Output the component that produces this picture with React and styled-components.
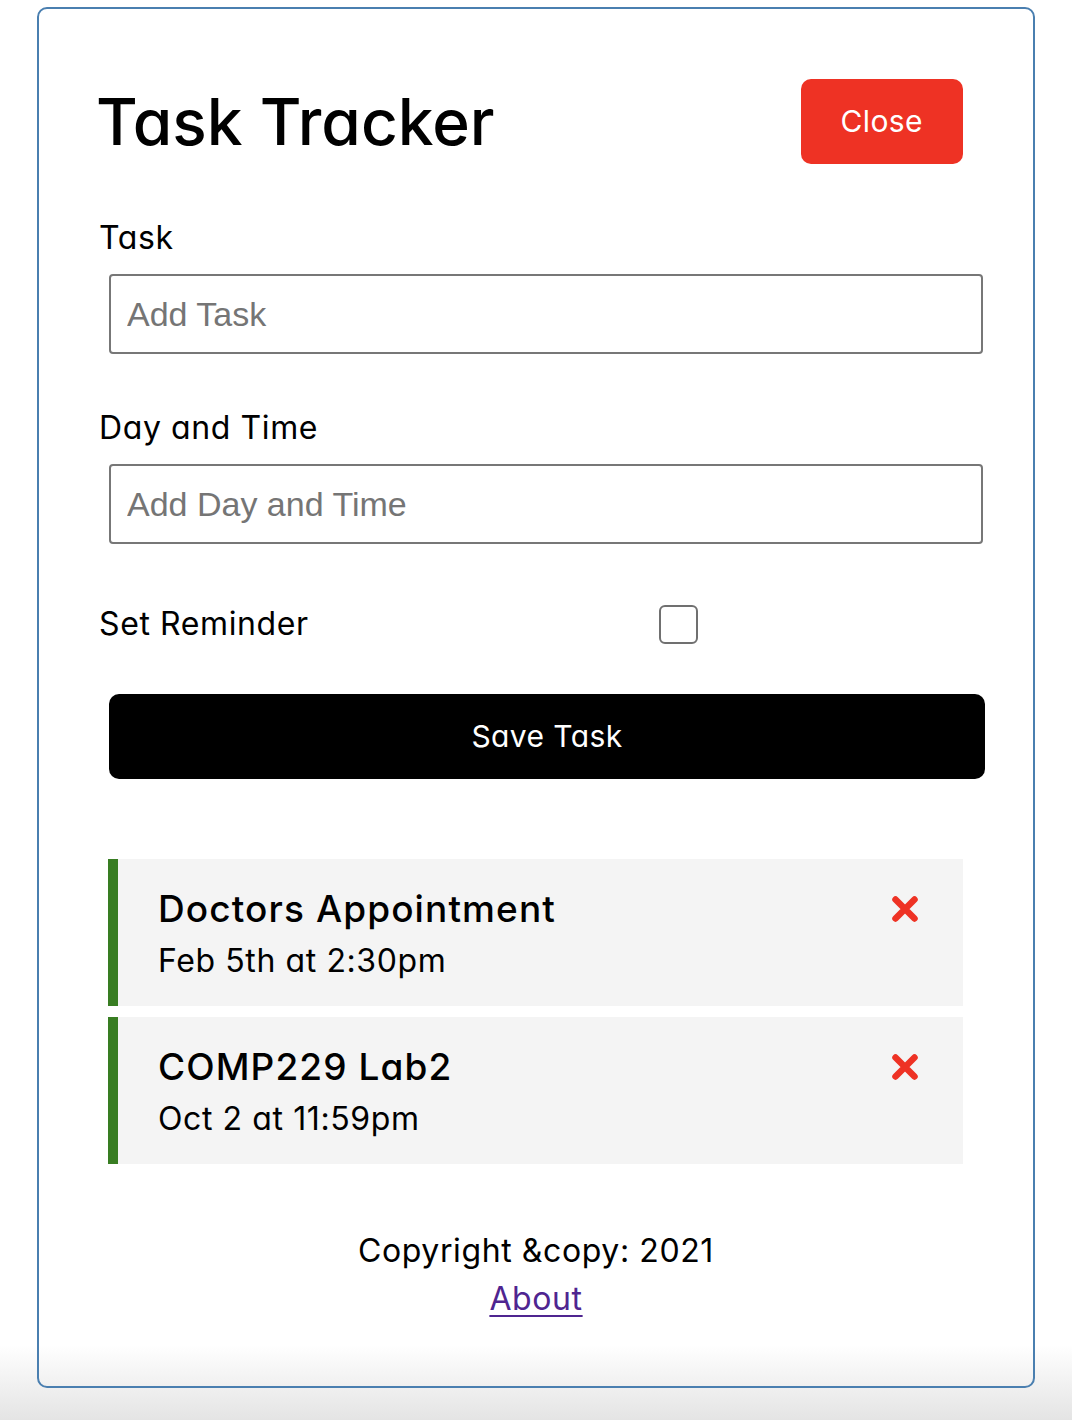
import React, { useState } from 'react';
import styled, { createGlobalStyle } from 'styled-components';

const GlobalStyle = createGlobalStyle`
  * {
    box-sizing: border-box;
    margin: 0;
    padding: 0;
  }
  html {
    min-height: 1420px;
    background: linear-gradient(to bottom, #ffffff 0, #ffffff 1345px, #e4e4e4 1420px);
  }
  body {
    font-family: Inter, 'Noto Sans', sans-serif;
    font-feature-settings: 'cv11' 1;
    font-size: 32px;
    line-height: 48px;
    letter-spacing: 0.6px;
    color: #000;
  }
`;

const Container = styled.div`
  width: 998px;
  margin: 7px 0 0 37px;
  border: 2px solid #4a7fb0;
  border-radius: 10px;
  padding: 60px;
`;

const Header = styled.header`
  display: flex;
  justify-content: space-between;
  align-items: center;
  margin-bottom: 40px;
`;

const Title = styled.h1`
  font-size: 64px;
  font-weight: 500;
  line-height: 96px;
  letter-spacing: 0;
  margin-left: -3px;
`;

const Button = styled.button`
  display: ${(p) => (p.block ? 'block' : 'inline-block')};
  width: ${(p) => (p.block ? 'calc(100% + 2px)' : 'auto')};
  background: ${(p) => p.color || '#000'};
  color: #fff;
  border: none;
  border-radius: 10px;
  margin: 10px;
  padding: 20px 40px;
  font-family: inherit;
  font-feature-settings: 'cv11' 1;
  font-size: 30px;
  line-height: 45px;
  letter-spacing: 0.4px;
  cursor: pointer;
`;

const Form = styled.form`
  margin-bottom: 80px;
`;

const FormControl = styled.div`
  margin: 0 0 50px;
`;

const Label = styled.label`
  display: block;
  font-size: 32px;
  line-height: 48px;
`;

const Input = styled.input`
  display: block;
  width: 874px;
  height: 80px;
  margin: 12px 10px 0;
  padding: 6px 16px;
  border: 2px solid #777;
  border-radius: 4px;
  font-family: 'Liberation Sans', Arial, sans-serif;
  font-size: 34px;
  letter-spacing: 0;
  &::placeholder {
    color: #757575;
  }
`;

const CheckRow = styled.div`
  display: flex;
  align-items: center;
  height: 60px;
  margin-bottom: 40px;
`;

const CheckLabel = styled(Label)`
  flex: 1;
`;

const CheckCell = styled.div`
  flex: 2;
  display: flex;
  justify-content: center;
`;

const CheckBox = styled.span`
  width: 39px;
  height: 39px;
  margin-right: 6px;
  border: 2px solid #707070;
  border-radius: 6px;
  background: #fff;
`;

const Task = styled.div`
  background: #f4f4f4;
  margin: 10px 10px 11px 9px;
  padding: 20px 40px;
  border-left: ${(p) => (p.reminder ? '10px solid #387d22' : 'none')};
  cursor: pointer;
`;

const TaskTitle = styled.h3`
  display: flex;
  justify-content: space-between;
  align-items: center;
  font-size: 37px;
  font-weight: 500;
  line-height: 56px;
  letter-spacing: 1.1px;
  padding-top: 2px;
`;

const TaskDay = styled.p`
  font-size: 32px;
  line-height: 48px;
  padding-bottom: 1px;
`;

const Times = styled.svg`
  width: 28px;
  height: 28px;
  margin-right: 4px;
  flex: none;
`;

const Footer = styled.footer`
  margin-top: 63px;
  padding-bottom: 3px;
  text-align: center;
  font-size: 32px;
  line-height: 48px;
`;

const Link = styled.a`
  color: #4f2590;
  text-decoration: underline;
  text-underline-offset: 5px;
  text-decoration-thickness: 2px;
`;

const DeleteIcon = () => (
  <Times viewBox="0 0 28 28">
    <path
      d="M4.5 4.5 L23.5 23.5 M23.5 4.5 L4.5 23.5"
      stroke="#ee3224"
      strokeWidth="6.5"
      strokeLinecap="round"
      fill="none"
    />
  </Times>
);

const tasks = [
  { id: 1, text: 'Doctors Appointment', day: 'Feb 5th at 2:30pm', reminder: true },
  { id: 2, text: 'COMP229 Lab2', day: 'Oct 2 at 11:59pm', reminder: true }
];

export default function App() {
  const [text, setText] = useState('');
  const [day, setDay] = useState('');

  return (
    <>
      <GlobalStyle />
      <Container>
        <Header>
          <Title>Task Tracker</Title>
          <Button color="#ee3224">Close</Button>
        </Header>
        <Form onSubmit={(e) => e.preventDefault()}>
          <FormControl>
            <Label>Task</Label>
            <Input
              type="text"
              placeholder="Add Task"
              value={text}
              onChange={(e) => setText(e.target.value)}
            />
          </FormControl>
          <FormControl>
            <Label>Day and Time</Label>
            <Input
              type="text"
              placeholder="Add Day and Time"
              value={day}
              onChange={(e) => setDay(e.target.value)}
            />
          </FormControl>
          <CheckRow>
            <CheckLabel>Set Reminder</CheckLabel>
            <CheckCell>
              <CheckBox />
            </CheckCell>
          </CheckRow>
          <Button block type="submit">Save Task</Button>
        </Form>
        {tasks.map((task) => (
          <Task key={task.id} reminder={task.reminder}>
            <TaskTitle>
              {task.text}
              <DeleteIcon />
            </TaskTitle>
            <TaskDay>{task.day}</TaskDay>
          </Task>
        ))}
        <Footer>
          <p>Copyright &amp;copy: 2021</p>
          <Link href="#about">About</Link>
        </Footer>
      </Container>
    </>
  );
}
